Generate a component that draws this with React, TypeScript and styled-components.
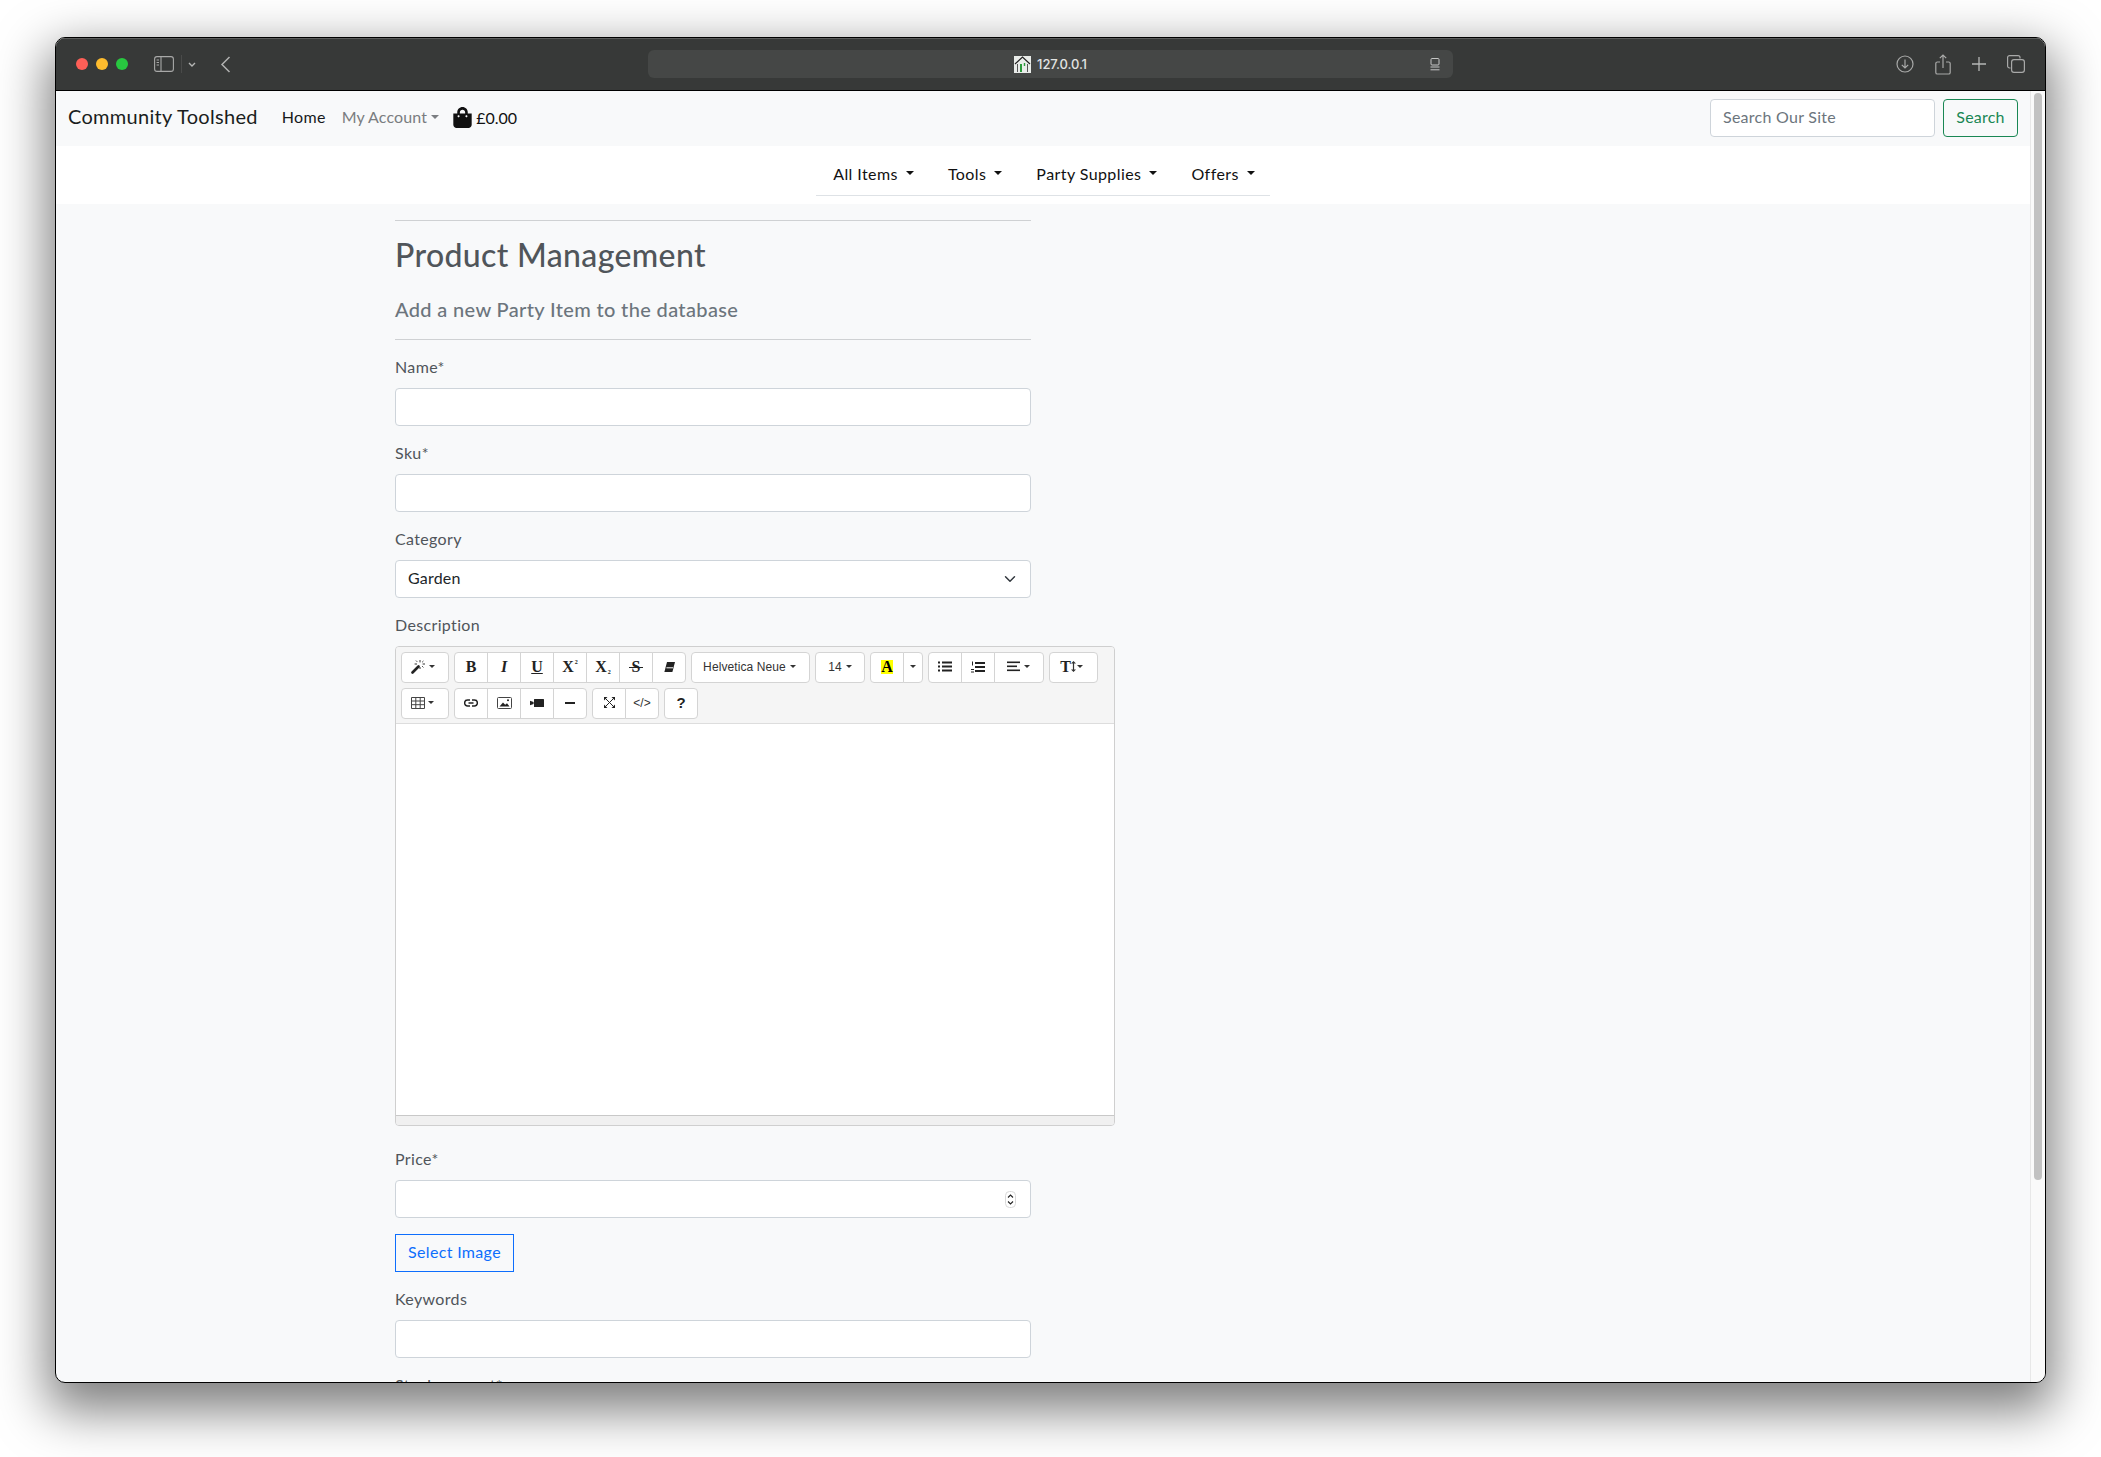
import React from 'react'
import styled, { createGlobalStyle } from 'styled-components'
import { FaShoppingBag } from 'react-icons/fa'

const GlobalStyle = createGlobalStyle`
  html, body {
    margin: 0;
    height: 1457px;
    overflow: hidden;
    background: #ffffff;
  }
  * {
    box-sizing: border-box;
  }
`

// Toolbar icons
const WandIcon = () => (
  <svg width="16" height="15" viewBox="0 0 16 15">
    <path d="M1.5 13.5 7.5 7.5" stroke="#222" strokeWidth="2.6" strokeLinecap="round" />
    <path d="M9 1v2.4M9 8v2M3.6 5H6M14 5h-2.4M12.4 2l-1.2 1.2M5 1.6l1.2 1.2M12.4 8.4l-1.2-1.2" stroke="#333" strokeWidth="1" />
  </svg>
)
const EraserIcon = () => (
  <svg width="13" height="12" viewBox="0 0 13 12">
    <path d="M4 1h8l-2.6 10H1.4z" fill="#222" />
    <path d="M3.4 6.8h6.6" stroke="#fff" strokeWidth="1" />
  </svg>
)
const UlIcon = () => (
  <svg width="14" height="11" viewBox="0 0 14 11" fill="#222">
    <rect x="0" y="0.5" width="2" height="2" />
    <rect x="0" y="4.5" width="2" height="2" />
    <rect x="0" y="8.5" width="2" height="2" />
    <rect x="4" y="0.5" width="10" height="2" />
    <rect x="4" y="4.5" width="10" height="2" />
    <rect x="4" y="8.5" width="10" height="2" />
  </svg>
)
const OlIcon = () => (
  <svg width="14" height="12" viewBox="0 0 14 12" fill="#222">
    <rect x="1" y="0.5" width="1" height="4" />
    <rect x="0" y="8" width="3" height="1" />
    <rect x="0" y="10.5" width="3" height="1" />
    <rect x="4" y="1" width="10" height="2" />
    <rect x="4" y="5" width="10" height="2" />
    <rect x="4" y="9" width="10" height="2" />
  </svg>
)
const AlignIcon = () => (
  <svg width="13" height="11" viewBox="0 0 13 11" fill="#222">
    <rect x="0" y="0.5" width="13" height="1.6" />
    <rect x="0" y="4.5" width="10" height="1.6" />
    <rect x="0" y="8.5" width="13" height="1.6" />
  </svg>
)
const TableIcon = () => (
  <svg width="14" height="12" viewBox="0 0 14 12" fill="none" stroke="#444" strokeWidth="1">
    <path d="M.5.5h13v11H.5zM.5 4h13M.5 7.7h13M4.8.5v11M9.2.5v11" />
  </svg>
)
const LinkIcon = () => (
  <svg width="14" height="8" viewBox="0 0 14 8" fill="none" stroke="#222" strokeWidth="1.5">
    <path d="M6 1H3.6a2.9 2.9 0 0 0 0 6H6M8 1h2.4a2.9 2.9 0 0 1 0 6H8M4.5 4h5" />
  </svg>
)
const PictureIcon = () => (
  <svg width="15" height="12" viewBox="0 0 15 12">
    <rect x="0.5" y="0.5" width="14" height="11" rx="1" fill="none" stroke="#444" />
    <path d="M2.5 9.5 6 5.5l2.2 2.2 1.8-1.4 2.5 3.2z" fill="#222" />
    <circle cx="11" cy="3.2" r="1" fill="#222" />
  </svg>
)
const VideoIcon = () => (
  <svg width="14" height="8" viewBox="0 0 14 8" fill="#222">
    <rect x="4" y="0" width="10" height="8" rx="0.5" />
    <path d="M0 1.8 3.6 3v2L0 6.2z" />
  </svg>
)
const MinusIcon = () => (
  <svg width="10" height="2" viewBox="0 0 10 2">
    <rect width="10" height="2" fill="#222" />
  </svg>
)
const ExpandIcon = () => (
  <svg width="11" height="11" viewBox="0 0 11 11" fill="#222">
    <path d="M0 0h3.5L0 3.5zM11 0v3.5L7.5 0zM0 11V7.5L3.5 11zM11 11H7.5L11 7.5z" />
    <path d="M1.5 1.5l8 8M9.5 1.5l-8 8" stroke="#222" strokeWidth="1" />
  </svg>
)
const HeightArrow = () => (
  <svg width="5" height="11" viewBox="0 0 5 11" fill="#333">
    <path d="M2.5 0 5 2.5H3.1v6H5L2.5 11 0 8.5h1.9v-6H0z" />
  </svg>
)

// Safari chrome icons
const SidebarIcon = () => (
  <svg width="20" height="16" viewBox="0 0 20 16" fill="none" stroke="#a8a9a8" strokeWidth="1.1">
    <rect x="0.6" y="0.6" width="18.8" height="14.8" rx="2.4" />
    <path d="M7 .6v14.8M2.6 4h2.4M2.6 6.5h2.4M2.6 9h2.4" />
  </svg>
)
const ChevronDownIcon = () => (
  <svg width="8" height="5" viewBox="0 0 8 5" fill="none" stroke="#b5b6b5" strokeWidth="1.4">
    <path d="M1 1l3 3 3-3" />
  </svg>
)
const BackIcon = () => (
  <svg width="11" height="17" viewBox="0 0 11 17" fill="none" stroke="#b0b1b0" strokeWidth="1.5">
    <path d="M9.5 1 2 8.5 9.5 16" />
  </svg>
)
const FavIcon = () => (
  <svg width="17" height="17" viewBox="0 0 17 17">
    <rect width="17" height="17" fill="#e9ece9" />
    <path d="M1 8 8.5 1 16 8" fill="none" stroke="#222" strokeWidth="1.2" />
    <path d="M3.5 8v8M13.5 8v8" stroke="#555" strokeWidth="1" />
    <path d="M7 8v8" stroke="#2c9a3c" strokeWidth="2" />
    <path d="M10.5 7v3" stroke="#2c9a3c" strokeWidth="1.4" />
  </svg>
)
const ReaderIcon = () => (
  <svg width="10" height="13" viewBox="0 0 10 13" fill="none" stroke="#c6c7c6" strokeWidth="1">
    <rect x="1" y="0.5" width="8" height="6.5" rx="1" />
    <path d="M0.5 9h9M0.5 11.8h9" />
  </svg>
)
const DownloadIcon = () => (
  <svg width="18" height="18" viewBox="0 0 18 18" fill="none" stroke="#a8a9a8" strokeWidth="1.2">
    <circle cx="9" cy="9" r="8" />
    <path d="M9 4.5v8.5M5.8 9.8 9 13l3.2-3.2" />
  </svg>
)
const ShareIcon = () => (
  <svg width="16" height="21" viewBox="0 0 16 21" fill="none" stroke="#a8a9a8" strokeWidth="1.2">
    <path d="M5 8H2.4A1.6 1.6 0 0 0 .8 9.6v8.8A1.6 1.6 0 0 0 2.4 20h11.2a1.6 1.6 0 0 0 1.6-1.6V9.6A1.6 1.6 0 0 0 13.6 8H11" />
    <path d="M8 14V1M4.8 4.2 8 1l3.2 3.2" />
  </svg>
)
const PlusIcon = () => (
  <svg width="14" height="14" viewBox="0 0 14 14" fill="none" stroke="#b5b6b5" strokeWidth="1.3">
    <path d="M7 0v14M0 7h14" />
  </svg>
)
const TabsIcon = () => (
  <svg width="18" height="18" viewBox="0 0 18 18" fill="none" stroke="#a8a9a8" strokeWidth="1.2">
    <path d="M3.5 13H2.6A2 2 0 0 1 .6 11V2.6a2 2 0 0 1 2-2H11a2 2 0 0 1 2 2v.9" />
    <rect x="4.6" y="4.6" width="12.8" height="12.8" rx="2.4" />
  </svg>
)

function App() {
  return (
    <>
      <GlobalStyle />
      <Desktop>
        <BrowserWindow>
          <TitleBar>
            <TrafficLights>
              <Light $color="#fe5f57" />
              <Light $color="#febc2e" />
              <Light $color="#28c840" />
            </TrafficLights>
            <SidebarGroup>
              <SidebarIcon />
              <ChromeDivider />
              <ChevronDownIcon />
            </SidebarGroup>
            <BackButton>
              <BackIcon />
            </BackButton>
            <AddressBar>
              <AddressLabel>
                <FavIcon />
                <span>127.0.0.1</span>
              </AddressLabel>
              <ReaderSlot>
                <ReaderIcon />
              </ReaderSlot>
            </AddressBar>
            <ChromeActions>
              <DownloadIcon />
              <ShareIcon />
              <PlusIcon />
              <TabsIcon />
            </ChromeActions>
          </TitleBar>

          <Viewport>
            <Page>
              <TopNav>
                <Brand>Community Toolshed</Brand>
                <TopLink>Home</TopLink>
                <TopLink $muted>
                  My Account
                  <Caret $gap={4} $size={4} $color="#7b7e81" />
                </TopLink>
                <Basket>
                  <FaShoppingBag size={21} />
                  <span>£0.00</span>
                </Basket>
                <SearchForm>
                  <SearchInput placeholder="Search Our Site" />
                  <SearchButton>Search</SearchButton>
                </SearchForm>
              </TopNav>

              <CategoryBar>
                <CategoryTabs>
                  <CategoryLink>
                    All Items
                    <Caret $gap={8} $size={4} $color="#111" />
                  </CategoryLink>
                  <CategoryLink>
                    Tools
                    <Caret $gap={8} $size={4} $color="#111" />
                  </CategoryLink>
                  <CategoryLink>
                    Party Supplies
                    <Caret $gap={8} $size={4} $color="#111" />
                  </CategoryLink>
                  <CategoryLink>
                    Offers
                    <Caret $gap={8} $size={4} $color="#111" />
                  </CategoryLink>
                </CategoryTabs>
              </CategoryBar>

              <Container>
                <FormColumn>
                  <Rule />
                  <Title>Product Management</Title>
                  <Subtitle>Add a new Party Item to the database</Subtitle>
                  <SectionRule />

                  <Field>
                    <Label>Name*</Label>
                    <TextInput />
                  </Field>
                  <Field>
                    <Label>Sku*</Label>
                    <TextInput />
                  </Field>
                  <Field>
                    <Label>Category</Label>
                    <SelectInput defaultValue="Garden">
                      <option>Garden</option>
                    </SelectInput>
                  </Field>

                  <EditorField>
                    <Label>Description</Label>
                    <Editor>
                      <EditorToolbar>
                        <ToolRow>
                          <ToolGroup>
                            <ToolButton $width={48} $shift={4}>
                              <WandIcon />
                              <Caret $gap={2} $size={3} $color="#333" />
                            </ToolButton>
                          </ToolGroup>
                          <ToolGroup>
                            <ToolButton><SerifGlyph>B</SerifGlyph></ToolButton>
                            <ToolButton><SerifGlyph $italic>I</SerifGlyph></ToolButton>
                            <ToolButton><SerifGlyph $underline>U</SerifGlyph></ToolButton>
                            <ToolButton><SerifGlyph>X<Tiny $up>2</Tiny></SerifGlyph></ToolButton>
                            <ToolButton><SerifGlyph>X<Tiny>2</Tiny></SerifGlyph></ToolButton>
                            <ToolButton><StrikeGlyph>S</StrikeGlyph></ToolButton>
                            <ToolButton><EraserIcon /></ToolButton>
                          </ToolGroup>
                          <ToolGroup>
                            <ToolButton $width={119} $shift={2}>
                              <FontName>Helvetica Neue</FontName>
                              <Caret $gap={4} $size={3} $color="#333" />
                            </ToolButton>
                          </ToolGroup>
                          <ToolGroup>
                            <ToolButton $width={50}>
                              14
                              <Caret $gap={4} $size={3} $color="#333" />
                            </ToolButton>
                          </ToolGroup>
                          <ToolGroup>
                            <ToolButton><ColorGlyph>A</ColorGlyph></ToolButton>
                            <ToolButton $width={20}>
                              <Caret $gap={0} $size={3} $color="#333" />
                            </ToolButton>
                          </ToolGroup>
                          <ToolGroup>
                            <ToolButton><UlIcon /></ToolButton>
                            <ToolButton><OlIcon /></ToolButton>
                            <ToolButton $width={50} $shift={2}>
                              <AlignIcon />
                              <Caret $gap={4} $size={3} $color="#333" />
                            </ToolButton>
                          </ToolGroup>
                          <ToolGroup>
                            <ToolButton $width={49} $shift={4}>
                              <SerifGlyph>T</SerifGlyph>
                              <HeightArrow />
                              <Caret $gap={1} $size={3} $color="#333" />
                            </ToolButton>
                          </ToolGroup>
                        </ToolRow>
                        <ToolRow>
                          <ToolGroup>
                            <ToolButton $width={48} $shift={5}>
                              <TableIcon />
                              <Caret $gap={3} $size={3} $color="#333" />
                            </ToolButton>
                          </ToolGroup>
                          <ToolGroup>
                            <ToolButton><LinkIcon /></ToolButton>
                            <ToolButton><PictureIcon /></ToolButton>
                            <ToolButton><VideoIcon /></ToolButton>
                            <ToolButton><MinusIcon /></ToolButton>
                          </ToolGroup>
                          <ToolGroup>
                            <ToolButton><ExpandIcon /></ToolButton>
                            <ToolButton>&lt;/&gt;</ToolButton>
                          </ToolGroup>
                          <ToolGroup>
                            <ToolButton><HelpGlyph>?</HelpGlyph></ToolButton>
                          </ToolGroup>
                        </ToolRow>
                      </EditorToolbar>
                      <EditorArea />
                      <EditorResize />
                    </Editor>
                  </EditorField>

                  <Field>
                    <Label>Price*</Label>
                    <NumberWrap>
                      <TextInput />
                      <Spinner>
                        <svg width="11" height="17" viewBox="0 0 11 17" fill="none">
                          <rect x="0.5" y="0.5" width="10" height="16" rx="4" fill="#fff" stroke="#d8d8d8" />
                          <path d="M3 6.5 5.5 4 8 6.5M3 10.5 5.5 13 8 10.5" stroke="#222" strokeWidth="1.1" />
                        </svg>
                      </Spinner>
                    </NumberWrap>
                  </Field>

                  <Field>
                    <ImageButton>Select Image</ImageButton>
                  </Field>

                  <Field>
                    <Label>Keywords</Label>
                    <TextInput />
                  </Field>
                  <Field>
                    <Label>Stock amount*</Label>
                    <TextInput />
                  </Field>
                </FormColumn>
              </Container>
            </Page>
            <ScrollTrack>
              <ScrollThumb />
            </ScrollTrack>
          </Viewport>
        </BrowserWindow>
      </Desktop>
    </>
  )
}

export default App

const Desktop = styled.div`
  width: 2101px;
  height: 1457px;
  padding: 37px 55px 74px 55px;
  background: #ffffff;
  font-family: 'Lato', 'Noto Sans', sans-serif;
  letter-spacing: 0.35px;
`

const BrowserWindow = styled.div`
  height: 1346px;
  display: flex;
  flex-direction: column;
  overflow: hidden;
  border: 1px solid #000000;
  border-radius: 10px;
  background: #f8f9fa;
  box-shadow: 0 20px 50px 8px rgba(0, 0, 0, 0.5);
`

const TitleBar = styled.div`
  flex: none;
  height: 53px;
  display: flex;
  align-items: center;
  padding: 0 20px 0 20px;
  background: #373938;
  border-bottom: 1px solid #000000;
  box-shadow: inset 0 1px 0 #5c5d5c;
`

const TrafficLights = styled.div`
  display: flex;
  gap: 8px;
`

const Light = styled.span<{ $color: string }>`
  width: 12px;
  height: 12px;
  border-radius: 50%;
  background: ${(p) => p.$color};
`

const SidebarGroup = styled.div`
  display: flex;
  align-items: center;
  margin-left: 26px;
`

const ChromeDivider = styled.span`
  width: 1px;
  height: 18px;
  margin: 0 6px 0 7px;
  background: #4a4b4a;
`

const BackButton = styled.div`
  display: flex;
  margin-left: 24px;
`

const AddressBar = styled.div`
  position: relative;
  width: 805px;
  height: 28px;
  margin-left: 417px;
  display: flex;
  align-items: center;
  justify-content: center;
  border-radius: 6px;
  background: #454746;
`

const AddressLabel = styled.div`
  display: flex;
  align-items: center;
  gap: 6px;
  color: #e2e3e2;
  font-family: 'Inter', sans-serif;
  font-size: 13px;
  font-weight: 500;
  letter-spacing: -0.1px;
`

const ReaderSlot = styled.div`
  position: absolute;
  right: 13px;
  top: 8px;
  display: flex;
`

const ChromeActions = styled.div`
  margin-left: auto;
  display: flex;
  align-items: center;
  gap: 21px;
`

const Viewport = styled.div`
  flex: 1;
  min-height: 0;
  display: flex;
`

const Page = styled.div`
  flex: 1;
  min-width: 0;
  overflow: hidden;
  color: #212529;
`

const ScrollTrack = styled.div`
  flex: none;
  width: 15px;
  padding: 2px 3px;
  background: #fafafa;
  border-left: 1px solid #e8e8e8;
`

const ScrollThumb = styled.div`
  height: 1087px;
  border-radius: 4px;
  background: #c2c2c2;
`

const TopNav = styled.nav`
  height: 55px;
  display: flex;
  align-items: flex-start;
  padding: 8px 12px 0;
  background: #f8f9fa;
  line-height: 35px;
`

const Brand = styled.a`
  margin-right: 16px;
  font-size: 20px;
  letter-spacing: 0.3px;
  color: #1a1d20;
`

const TopLink = styled.a<{ $muted?: boolean }>`
  display: flex;
  align-items: center;
  padding: 0 8px;
  font-size: 16px;
  letter-spacing: ${(p) => (p.$muted ? '0.13px' : '0.3px')};
  color: ${(p) => (p.$muted ? '#7a7d80' : '#16191c')};
`

const Basket = styled.a`
  display: flex;
  align-items: center;
  gap: 3px;
  height: 36px;
  margin-left: 5px;
  font-size: 16px;
  letter-spacing: 0;
  color: #111111;
`

const Caret = styled.span<{ $gap: number; $size: number; $color: string }>`
  display: inline-block;
  margin-left: ${(p) => p.$gap}px;
  border-top: ${(p) => p.$size}px solid ${(p) => p.$color};
  border-left: ${(p) => p.$size}px solid transparent;
  border-right: ${(p) => p.$size}px solid transparent;
`

const SearchForm = styled.form`
  margin-left: auto;
  display: flex;
  gap: 8px;
`

const SearchInput = styled.input`
  width: 225px;
  height: 38px;
  padding: 0 12px 3px;
  border: 1px solid #ced4da;
  border-radius: 4px;
  background: #ffffff;
  font-family: inherit;
  font-size: 16px;
  letter-spacing: 0.27px;
  &::placeholder {
    color: #6c757d;
    opacity: 1;
  }
`

const SearchButton = styled.button`
  width: 75px;
  height: 38px;
  padding: 0 0 3px;
  border: 1px solid #198754;
  border-radius: 4px;
  background: transparent;
  color: #198754;
  font-family: inherit;
  font-size: 16px;
  letter-spacing: 0.2px;
`

const CategoryBar = styled.div`
  height: 58px;
  display: flex;
  justify-content: center;
  padding-top: 9px;
  background: #ffffff;
`

const CategoryTabs = styled.div`
  display: flex;
  gap: 2px;
  height: 41px;
  border-bottom: 1px solid #dee2e6;
`

const CategoryLink = styled.a`
  display: flex;
  align-items: center;
  height: 36px;
  padding: 0 15px 0 17px;
  font-size: 16px;
  letter-spacing: 0.42px;
  color: #111111;
`

const Container = styled.main`
  width: 1320px;
  margin: 0 auto;
  padding: 16px 12px 0;
`

const FormColumn = styled.div`
  width: 636px;
  color: #50555a;
`

const Rule = styled.hr`
  margin: 0 0 16px;
  border: 0;
  border-top: 1px solid #cfd1d3;
`

const SectionRule = styled(Rule)`
  margin: 18px 0 16px;
`

const Title = styled.h2`
  margin: 0 0 24px;
  font-size: 32px;
  font-weight: 500;
  line-height: 36px;
`

const Subtitle = styled.h5`
  margin: 0;
  font-size: 20px;
  font-weight: 500;
  line-height: 24px;
  color: #6c757d;
`

const Field = styled.div`
  margin-bottom: 16px;
`

const EditorField = styled.div`
  margin-bottom: 22px;
`

const Label = styled.label`
  display: block;
  margin-bottom: 8px;
  font-size: 16px;
  line-height: 22px;
  height: 24px;
`

const TextInput = styled.input`
  display: block;
  width: 100%;
  height: 38px;
  padding: 6px 12px;
  border: 1px solid #ced4da;
  border-radius: 4px;
  background: #ffffff;
  font-family: inherit;
  font-size: 16px;
`

const SelectInput = styled.select`
  display: block;
  width: 100%;
  height: 38px;
  padding: 3px 36px 6px 12px;
  appearance: none;
  border: 1px solid #ced4da;
  border-radius: 4px;
  background: #ffffff
    url("data:image/svg+xml,%3csvg xmlns='http://www.w3.org/2000/svg' viewBox='0 0 16 16'%3e%3cpath fill='none' stroke='%23343a40' stroke-linecap='round' stroke-linejoin='round' stroke-width='2' d='M2 5l6 6 6-6'/%3e%3c/svg%3e")
    no-repeat right 12px center / 16px 12px;
  color: #212529;
  font-family: inherit;
  font-size: 16px;
  letter-spacing: 0.2px;
`

const Editor = styled.div`
  width: 720px;
  height: 480px;
  display: flex;
  flex-direction: column;
  overflow: hidden;
  border: 1px solid #cfcfcf;
  border-radius: 4px;
  letter-spacing: 0;
`

const EditorToolbar = styled.div`
  flex: none;
  height: 77px;
  display: flex;
  flex-direction: column;
  gap: 5px;
  padding: 5px 5px 0;
  background: #f5f5f5;
  border-bottom: 1px solid #dddddd;
`

const ToolRow = styled.div`
  display: flex;
  gap: 5px;
`

const ToolGroup = styled.div`
  display: flex;
`

const ToolButton = styled.button<{ $width?: number; $shift?: number }>`
  width: ${(p) => p.$width ?? 34}px;
  height: 31px;
  display: flex;
  align-items: center;
  justify-content: center;
  padding: 0 ${(p) => p.$shift ?? 0}px 2px 0;
  margin-left: -1px;
  border: 1px solid #d4d4d4;
  background: #ffffff;
  color: #333333;
  font-family: 'Liberation Sans', Arial, sans-serif;
  font-size: 12px;
  &:first-child {
    margin-left: 0;
    border-top-left-radius: 4px;
    border-bottom-left-radius: 4px;
  }
  &:last-child {
    border-top-right-radius: 4px;
    border-bottom-right-radius: 4px;
  }
`

const FontName = styled.span`
  letter-spacing: 0.1px;
`

const SerifGlyph = styled.span<{ $italic?: boolean; $underline?: boolean }>`
  display: inline-flex;
  font-family: 'Liberation Serif', 'Times New Roman', serif;
  font-size: 16px;
  font-weight: 700;
  font-style: ${(p) => (p.$italic ? 'italic' : 'normal')};
  color: #222222;
  text-decoration: ${(p) => (p.$underline ? 'underline' : 'none')};
`

const StrikeGlyph = styled.span`
  position: relative;
  font-family: 'Liberation Serif', 'Times New Roman', serif;
  font-size: 16px;
  font-weight: 700;
  color: #222222;
  &::after {
    content: '';
    position: absolute;
    left: -3px;
    right: -3px;
    top: 9px;
    height: 1px;
    background: #222222;
  }
`

const Tiny = styled.span<{ $up?: boolean }>`
  align-self: ${(p) => (p.$up ? 'flex-start' : 'flex-end')};
  margin-left: 1px;
  font-size: 6px;
  line-height: 8px;
`

const ColorGlyph = styled.span`
  width: 12px;
  height: 14px;
  display: flex;
  align-items: center;
  justify-content: center;
  background: #ffff00;
  color: #000000;
  font-family: 'Liberation Serif', 'Times New Roman', serif;
  font-size: 16px;
  font-weight: 700;
  line-height: 14px;
`

const HelpGlyph = styled.span`
  font-size: 15px;
  font-weight: 700;
  color: #222222;
`

const EditorArea = styled.div`
  flex: 1;
  background: #ffffff;
`

const EditorResize = styled.div`
  flex: none;
  height: 10px;
  background: #f0f0f0;
  border-top: 1px solid #c8c8c8;
`

const NumberWrap = styled.div`
  position: relative;
`

const Spinner = styled.span`
  position: absolute;
  top: 11px;
  right: 15px;
  display: flex;
`

const ImageButton = styled.button`
  display: block;
  width: 119px;
  height: 38px;
  padding: 0 0 3px;
  border: 1px solid #0d6efd;
  background: transparent;
  color: #0d6efd;
  font-family: inherit;
  font-size: 16px;
  letter-spacing: 0.33px;
`
